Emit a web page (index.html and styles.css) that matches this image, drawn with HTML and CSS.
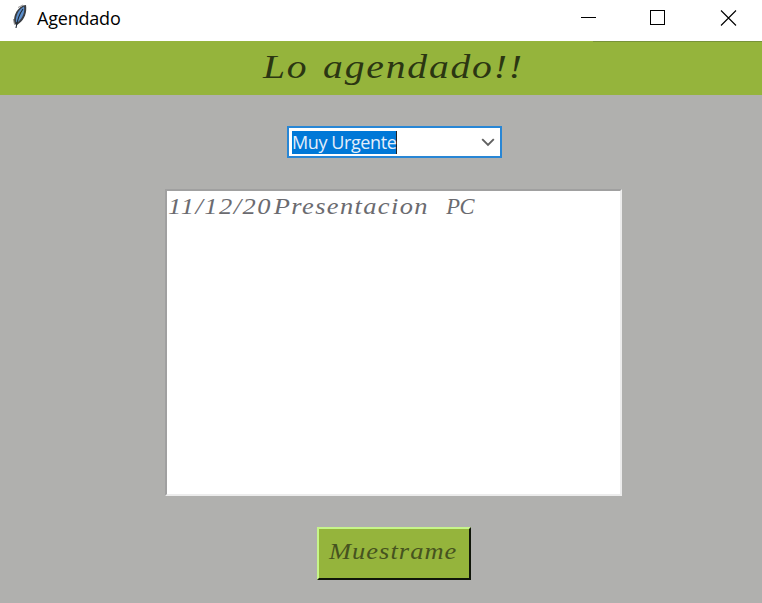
FILE: index.html
```html
<!DOCTYPE html>
<html lang="es">
<head>
<meta charset="utf-8">
<title>Agendado</title>
<link rel="stylesheet" href="styles.css">
</head>
<body>
<div class="window">
  <header class="titlebar">
    <svg class="feather" width="16" height="26" viewBox="0 0 16 26">
      <path d="M2.500 20C1 14 3 6 11 1.500l3-.5c1 7-1 14-7 18.500l-2 1.500z" fill="#3a3d42"/>
      <path d="M4 18C3.500 12 6 6 12 2.500c1 5-1 11-6 15.500z" fill="#5b8fcd"/>
      <path d="M11 5C8 9 5.500 14 4 24" fill="none" stroke="#1d2733" stroke-width="1.100"/>
      <path d="M1.500 15c.2 3 .8 5 1.500 6M6 3.500l5-2.500" fill="none" stroke="#999" stroke-width="1"/>
    </svg>
    <span class="caption">Agendado</span>
    <svg class="controls" width="156" height="16" viewBox="0 0 156 16" fill="none" stroke="#000">
      <path d="M0 7.500h15M69.500.5h14v14h-14z" shape-rendering="crispEdges"/>
      <path d="M140 .5l15 15M155 .5l-15 15" stroke-width="1.100"/>
    </svg>
  </header>
  <h1 class="banner"><span class="banner-text">Lo agendado!!</span></h1>
  <main class="content">
    <div class="combo">
      <span class="selected">Muy Urgente</span>
      <svg width="14" height="9" viewBox="0 0 14 9"><path d="M1.200 1.200L7 7l5.800-5.800" fill="none" stroke="#606060" stroke-width="1.900"/></svg>
    </div>
    <div class="list"><div class="item"><span class="date">11/12/20</span>Presentacion <span class="initials">PC</span></div></div>
    <button class="show"><span class="show-text">Muestrame</span></button>
  </main>
</div>
</body>
</html>
```
FILE: styles.css
```css
* { box-sizing: border-box; }
body { margin: 0; }
.window {
  width: 762px;
  height: 603px;
  display: flex;
  flex-direction: column;
  background: #b0b0ae;
  overflow: hidden;
}
.titlebar {
  height: 41px;
  flex: none;
  display: flex;
  align-items: flex-start;
  background: #fff;
  padding: 4px 25px 0 12px;
}
.caption {
  margin: 1px 0 0 9px;
  font: 18px/26px "Open Sans", "Noto Sans", sans-serif;
  letter-spacing: -0.2px;
  color: #000;
}
.controls { margin: 6px 0 0 auto; }
.banner {
  height: 54px;
  flex: none;
  margin: 0;
  padding-left: 263px;
  background: linear-gradient(#789339, #789339) 593px 0 / 169px 1px no-repeat #95b43c;
  font: italic 33px/52px "Liberation Serif", serif;
  letter-spacing: 1.5px;
  word-spacing: 2.5px;
  color: #2b3612;
  white-space: nowrap;
}
.banner-text {
  display: inline-block;
  transform: scaleX(1.2);
  transform-origin: 0 0;
}
.content {
  display: flex;
  flex-direction: column;
  align-items: flex-start;
}
.combo {
  width: 215px;
  height: 32px;
  margin: 31px 0 0 287px;
  padding: 0 5px 0 3px;
  display: flex;
  align-items: center;
  justify-content: space-between;
  background: #fff;
  border: 2px solid #2886d5;
}
.selected {
  height: 23px;
  width: 105px;
  background: #0078d7;
  border-right: 1px solid #222;
  color: #e4eefa;
  font: 18px/23px "Open Sans", "Noto Sans", sans-serif;
  letter-spacing: -0.4px;
  white-space: nowrap;
}
.list {
  width: 457px;
  height: 307px;
  margin: 31px 0 0 165px;
  padding: 1px 0 0 1px;
  background: #fff;
  border: 2px solid;
  border-color: #a0a0a0 #ececec #ececec #a0a0a0;
}
.item {
  width: 380px;
  font: italic 23px/29px "Liberation Serif", serif;
  letter-spacing: 1.2px;
  word-spacing: 8.5px;
  color: #6b6b70;
  white-space: nowrap;
  transform: scaleX(1.15);
  transform-origin: 0 0;
}
.date {
  margin-right: 1.5px;
  letter-spacing: 1.3px;
}
.initials {
  display: inline-block;
  letter-spacing: -0.5px;
  transform: scaleX(0.85);
  transform-origin: 0 0;
}
.show {
  width: 154px;
  height: 53px;
  margin: 31px 0 0 317px;
  padding: 0 0 3px 10px;
  background: #95b43c;
  border: 2px solid;
  border-color: #c6f58a #10150a #10150a #c6f58a;
  border-radius: 0;
  color: #46531f;
  font: italic 23px/28px "Liberation Serif", serif;
  letter-spacing: 0.9px;
  text-align: left;
}
.show-text {
  display: inline-block;
  transform: scaleX(1.15);
  transform-origin: 0 0;
}
```
